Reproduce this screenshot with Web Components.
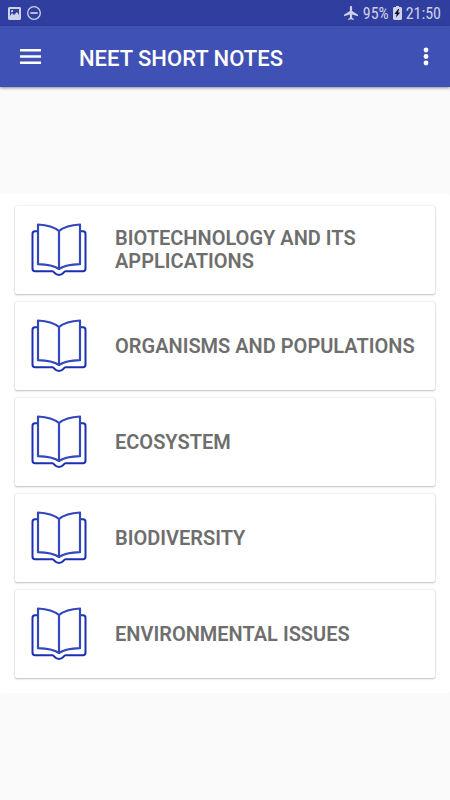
<!DOCTYPE html>
<html lang="en">
<head>
<meta charset="utf-8">
<meta name="viewport" content="width=device-width, initial-scale=1">
<title>NEET SHORT NOTES</title>
<style>
  html, body { height: 100%; }
  body { margin: 0; background: #fafafa; font-family: Roboto, "Noto Sans", sans-serif; }
</style>
</head>
<body>
<notes-app>
  <status-bar slot="status"></status-bar>
  <app-bar slot="bar">NEET SHORT NOTES</app-bar>
  <chapter-list>
    <chapter-card>BIOTECHNOLOGY AND ITS APPLICATIONS</chapter-card>
    <chapter-card>ORGANISMS AND POPULATIONS</chapter-card>
    <chapter-card>ECOSYSTEM</chapter-card>
    <chapter-card>BIODIVERSITY</chapter-card>
    <chapter-card>ENVIRONMENTAL ISSUES</chapter-card>
  </chapter-list>
</notes-app>
<script>
function define(name, html) {
  const template = document.createElement('template');
  template.innerHTML = html;
  customElements.define(name, class extends HTMLElement {
    constructor() {
      super();
      this.attachShadow({ mode: 'open' }).append(template.content.cloneNode(true));
    }
  });
}

define('notes-app', `
  <style>
    :host { display: flex; flex-direction: column; min-height: 100%; }
    main { flex: 1; display: flex; flex-direction: column; justify-content: center; }
  </style>
  <slot name="status"></slot>
  <slot name="bar"></slot>
  <main><slot></slot></main>`);

define('status-bar', `
  <style>
    :host { display: flex; align-items: center; justify-content: space-between; height: 26px;
      padding: 0 9px 0 8px; background: #303f9f; color: #cdd1e9; font-size: 16px; line-height: 26px; }
    div { display: flex; align-items: center; }
    .left { gap: 6px; }
    .right { gap: 4px; }
    .plane { margin-right: 1px; }
    span { font-family: "Roboto Condensed", Roboto, sans-serif; padding-top: 2px; }
    svg { display: block; }
  </style>
  <div class="left">
    <svg width="13" height="13" viewBox="0 0 13 13" aria-hidden="true">
      <path fill="currentColor" fill-rule="evenodd" d="M1 0h11l1 1v11l-1 1H1l-1-1V1zM2 2v7l2-3 2 2 3-3 2 3V2zM4 3h1v2H3V4z"/>
    </svg>
    <svg width="14" height="14" viewBox="0 0 14 14" fill="none" stroke="currentColor" aria-hidden="true">
      <circle cx="7" cy="7" r="6.3" stroke-width="1.3"/><path d="M3.3 7h7.4" stroke-width="1.7"/>
    </svg>
  </div>
  <div class="right">
    <svg class="plane" width="14" height="14" viewBox="0 0 14 14" aria-hidden="true">
      <path fill="currentColor" d="M7 0c.8 0 1.1.6 1.1 1.2v3.900L14 8.800v1.400L8.100 8.500v3.200l1.700 1.200V14L7 13.200 4.200 14v-1.100l1.700-1.200V8.500L0 10.200V8.800l5.900-3.700V1.200C5.900.6 6.200 0 7 0z"/>
    </svg>
    <span>95%</span>
    <svg width="9" height="14" viewBox="0 0 9 14" aria-hidden="true">
      <path fill="currentColor" d="M3 0h3v1h2l1 1v11l-1 1H1l-1-1V2l1-1h2z"/>
      <path fill="#080c20" d="M5.200 3 1.500 8h2.200l-.7 3.500L7.200 6.500H4.900L6.300 3z"/>
    </svg>
    <span>21:50</span>
  </div>`);

define('app-bar', `
  <style>
    :host { display: flex; align-items: center; height: 61px; padding: 0 13px 0 15px;
      background: #3f51b5; color: #fff; box-shadow: 0 1px 3px rgba(0,0,0,.45); }
    h1 { flex: 1; margin: 0; padding: 4px 0 0 33px; font-size: 22px; line-height: 28px; font-weight: 500; }
    button { display: grid; place-items: center; height: 40px; padding: 0; border: 0; background: none; color: inherit; }
    .menu { width: 31px; }
    .more { width: 22px; }
    svg { display: block; }
  </style>
  <button class="menu" aria-label="Open navigation">
    <svg width="21" height="15" viewBox="0 0 21 15" aria-hidden="true"><path fill="currentColor" d="M0 0h21v2.500H0zM0 6.200h21v2.500H0zM0 12.400h21v2.500H0z"/></svg>
  </button>
  <h1><slot></slot></h1>
  <button class="more" aria-label="More options">
    <svg width="6" height="19" viewBox="0 0 6 19" fill="currentColor" aria-hidden="true"><circle cx="3" cy="3" r="2.400"/><circle cx="3" cy="9.500" r="2.400"/><circle cx="3" cy="16" r="2.400"/></svg>
  </button>`);

define('chapter-list', `
  <style>
    :host { display: grid; gap: 8px; padding: 12px 15px 15px; background: #fff; border-radius: 3px; }
  </style>
  <slot></slot>`);

define('chapter-card', `
  <style>
    :host { display: block; background: #fff; border-radius: 2px;
      box-shadow: 0 0 2px rgba(0,0,0,.16), 0 1px 2px rgba(0,0,0,.22); }
    button { display: flex; align-items: center; gap: 28px; width: 100%; min-height: 88px; padding: 8px 16px;
      border: 0; background: none; font: 600 20px/23px Roboto, "Noto Sans", sans-serif; color: #6e6e6e; text-align: left; }
    svg { display: block; flex: none; }
    span { flex: 1; }
  </style>
  <button>
    <svg width="56" height="54" viewBox="0 0 56 54" fill="none" stroke-linejoin="round" aria-hidden="true">
      <path stroke="#1a2fb5" stroke-width="2" d="M6.500 8.300H4Q1.500 8.300 1.500 10.800V45.500Q1.500 48.300 4 48.300H21.500C23.500 48.300 23.500 52 28 52S32.500 48.300 34.500 48.300H52Q54.500 48.300 54.500 45.500V10.800Q54.500 8.300 52 8.300H49.500"/>
      <path stroke="#3348bd" stroke-width="2.200" d="M28 8C22.500 3.500 15.500 2 7 1.500V41.200C16 41.400 22.500 42.300 28 46C33.500 42.300 40 41.400 49 41.200V1.500C40.500 2 33.500 3.500 28 8ZM28 8V46"/>
    </svg>
    <span><slot></slot></span>
  </button>`);
</script>
</body>
</html>
